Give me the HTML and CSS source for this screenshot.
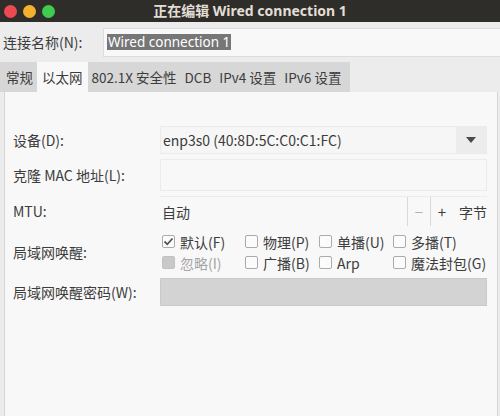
FILE: index.html
```html
<!DOCTYPE html>
<html lang="zh-CN">
<head>
    <meta charset="UTF-8">
    <title>正在编辑 Wired connection 1</title>
    <link rel="stylesheet" href="styles.css">
</head>
<body>
    <div class="titlebar">
        <div class="lights">
            <span class="light red"></span>
            <span class="light yellow"></span>
            <span class="light green"></span>
        </div>
        <div class="title">正在编辑 Wired connection 1</div>
    </div>
    <div class="name-row">
        <label class="name-label">连接名称(N):</label>
        <div class="name-entry"><span class="selected">Wired connection 1</span></div>
    </div>
    <div class="tabs">
        <div class="tab">常规</div>
        <div class="tab active">以太网</div>
        <div class="tab">802.1X 安全性</div>
        <div class="tab">DCB</div>
        <div class="tab">IPv4 设置</div>
        <div class="tab">IPv6 设置</div>
    </div>
    <div class="panel">
        <div class="form">
            <div class="label">设备(D):</div>
            <div class="combo">
                <span class="combo-text">enp3s0 (40:8D:5C:C0:C1:FC)</span>
                <span class="combo-btn">
                    <svg width="10" height="6" viewBox="0 0 10 6"><path d="M0 0h10L5 6z" fill="#4a4a4a"/></svg>
                </span>
            </div>

            <div class="label">克隆 MAC 地址(L):</div>
            <div class="entry"></div>

            <div class="label">MTU:</div>
            <div class="spin">
                <span class="spin-text">自动</span>
                <span class="spin-btn minus">−</span>
                <span class="spin-btn plus">+</span>
                <span class="unit">字节</span>
            </div>

            <div class="label">局域网唤醒:</div>
            <div class="checks">
                <label class="check"><span class="box checked">
                    <svg width="11" height="11" viewBox="0 0 11 11"><path d="M1.5 5.5l2.8 2.8L9.5 2.5" fill="none" stroke="#555" stroke-width="1.8"/></svg>
                </span>默认(F)</label>
                <label class="check"><span class="box"></span>物理(P)</label>
                <label class="check"><span class="box"></span>单播(U)</label>
                <label class="check"><span class="box"></span>多播(T)</label>
                <label class="check disabled"><span class="box"></span>忽略(I)</label>
                <label class="check"><span class="box"></span>广播(B)</label>
                <label class="check"><span class="box"></span>Arp</label>
                <label class="check"><span class="box"></span>魔法封包(G)</label>
            </div>

            <div class="label">局域网唤醒密码(W):</div>
            <div class="entry disabled"></div>
        </div>
    </div>
</body>
</html>
```

FILE: styles.css
```css
body {
    margin: 0;
    width: 500px;
    height: 416px;
    overflow: hidden;
    background-color: #ececec;
    font-family: "Noto Sans CJK SC", sans-serif;
    font-size: 14px;
    color: #3c3c3c;
    display: flex;
    flex-direction: column;
}
.titlebar {
    height: 22px;
    background-color: #2f2d2a;
    display: flex;
    align-items: center;
    position: relative;
    flex-shrink: 0;
}
.lights {
    display: flex;
    gap: 6px;
    padding-left: 4px;
}
.light {
    width: 13px;
    height: 13px;
    border-radius: 50%;
}
.red { background-color: #ec4a52; }
.yellow { background-color: #f3b22e; }
.green { background-color: #3fcb4f; }
.title {
    position: absolute;
    left: 0;
    right: 0;
    text-align: center;
    color: #e2ded6;
    font-family: "Noto Sans", "Noto Sans CJK SC", sans-serif;
    font-weight: bold;
    font-size: 14px;
    line-height: 22px;
}
.name-row {
    display: flex;
    align-items: center;
    height: 40px;
    flex-shrink: 0;
}
.name-label {
    width: 103px;
    padding-left: 3px;
    box-sizing: border-box;
}
.name-entry {
    flex: 1;
    height: 29px;
    background-color: #f8f8f8;
    border: 1px solid #dcdcdc;
    border-right: none;
    box-sizing: border-box;
    display: flex;
    align-items: center;
    padding-left: 3px;
}
.selected {
    background-color: #767676;
    color: #fff;
    font-family: "Noto Sans", sans-serif;
    font-size: 13.5px;
    line-height: 16px;
    padding: 0 1px;
}
.tabs {
    display: flex;
    align-self: flex-start;
    height: 30px;
    background-color: #d7d7d7;
    padding: 0 5px 0 2px;
    flex-shrink: 0;
    font-size: 13.5px;
}
.tab {
    display: flex;
    align-items: center;
    padding: 0 4px;
}
.tab.active {
    background-color: #f8f8f8;
    padding: 0 5px;
}
.panel {
    flex: 1;
    margin: 0 2px 0 4px;
    background-color: #f8f8f8;
    border-left: 1px solid #d6d6d6;
    border-right: 1px solid #d6d6d6;
    padding: 34px 10px 0 8px;
}
.form {
    display: grid;
    grid-template-columns: 147px 327px;
    grid-template-rows: 28px 32px 30px 42px 28px;
    row-gap: 5px;
}
.label {
    display: flex;
    align-items: center;
}
.combo {
    display: flex;
    align-items: center;
    background-color: #f6f6f6;
    border: 1px solid #ebebeb;
}
.combo-text {
    flex: 1;
    padding-left: 2px;
}
.combo-btn {
    width: 30px;
    height: 100%;
    background-color: #ececec;
    display: flex;
    align-items: center;
    justify-content: center;
}
.entry {
    background-color: #f8f8f8;
    border: 1px solid #ececec;
}
.entry.disabled {
    background-color: #d3d3d3;
    border-color: #cacaca;
}
.spin {
    display: flex;
    align-items: center;
    border-top: 1px solid #ececec;
}
.spin-text {
    flex: 1;
    padding-left: 2px;
    height: 100%;
    display: flex;
    align-items: center;
    border-right: 1px solid #d8d8d8;
}
.spin-btn {
    width: 22px;
    height: 100%;
    display: flex;
    align-items: center;
    justify-content: center;
    font-size: 15px;
}
.spin-btn.minus {
    color: #b0b0b0;
    border-right: 1px solid #d8d8d8;
}
.spin-btn.plus {
    color: #3c3c3c;
}
.unit {
    padding-left: 6px;
}
.checks {
    display: grid;
    grid-template-columns: 83px 74px 74px auto;
    grid-template-rows: 21px 21px;
    padding-left: 2px;
}
.check {
    display: flex;
    align-items: center;
    gap: 5px;
    white-space: nowrap;
}
.box {
    width: 13px;
    height: 13px;
    box-sizing: border-box;
    border: 1px solid #ababab;
    border-radius: 2px;
    background-color: #fbfbfb;
    display: flex;
    align-items: center;
    justify-content: center;
}
.check.disabled {
    color: #a5a5a5;
}
.check.disabled .box {
    background-color: #c9c9c9;
    border-color: #c2c2c2;
}
```
